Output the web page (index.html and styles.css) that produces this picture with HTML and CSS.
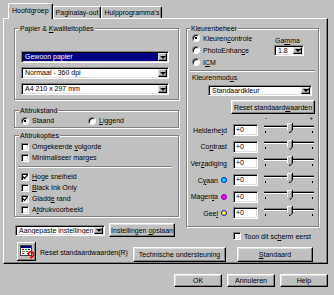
FILE: index.html
```html
<!DOCTYPE html>
<html lang="nl">
<head>
  <meta charset="UTF-8" />
  <title>Hoofdgroep</title>
  <link rel="stylesheet" href="styles.css">
</head>
<body>
  <div class="dialog">
    <div class="tabs">
      <div class="tab active">Hoofdgroep</div>
      <div class="tab">Paginalay-out</div>
      <div class="tab">Hulpprogramma's</div>
    </div>

    <div class="panel">
      <div class="cols">
        <div class="left">
          <fieldset class="group paper">
            <legend>Papier &amp; <u>K</u>waliteitopties</legend>
            <div class="combo sel"><span class="field">Gewoon papier</span><span class="drop"></span></div>
            <div class="combo"><span class="field">Normaal - 360 dpi</span><span class="drop"></span></div>
            <div class="combo"><span class="field">A4 210 x 297 mm</span><span class="drop"></span></div>
          </fieldset>

          <fieldset class="group orient">
            <legend>Afdrukstand</legend>
            <label class="radio on"><i class="dot"></i><span>Staand</span></label>
            <label class="radio"><i class="dot"></i><span><u>L</u>iggend</span></label>
          </fieldset>

          <fieldset class="group opts">
            <legend>Afdrukopties</legend>
            <label class="check"><i class="box"></i><span>Omgekeerde <u>v</u>olgorde</span></label>
            <label class="check"><i class="box"></i><span>Minimaliseer marges</span></label>
            <hr class="sep">
            <label class="check"><i class="box"><svg viewBox="0 0 7 7"><path d="M1 3l2 2 3.5-4"/></svg></i><span><u>H</u>oge snelheid</span></label>
            <label class="check"><i class="box"></i><span><u>B</u>lack Ink Only</span></label>
            <label class="check"><i class="box"><svg viewBox="0 0 7 7"><path d="M1 3l2 2 3.5-4"/></svg></i><span>Gladd<u>e</u> rand</span></label>
            <label class="check"><i class="box"></i><span>A<u>f</u>drukvoorbeeld</span></label>
          </fieldset>

          <div class="presets">
            <div class="combo preset"><span class="field">Aangepaste instellingen</span><span class="drop"></span></div>
            <button class="btn save">Instellingen <u>o</u>pslaan</button>
          </div>
        </div>

        <div class="right">
          <fieldset class="group color">
            <legend>Kleurenbeheer</legend>
            <div class="mode">
              <div class="radios">
                <label class="radio on"><i class="dot"></i><span>Kleuren<u>c</u>ontrole</span></label>
                <label class="radio"><i class="dot"></i><span>PhotoEnhan<u>c</u>e</span></label>
                <label class="radio"><i class="dot"></i><span>I<u>C</u>M</span></label>
              </div>
              <div class="gamma">
                <span class="gamma-label">Ga<u>m</u>ma</span>
                <div class="combo small"><span class="field">1.8</span><span class="drop"></span></div>
              </div>
            </div>
            <hr class="sep wide">
            <span class="caption">Kleurenmod<u>u</u>s</span>
            <div class="combo colormode"><span class="field">Standaardkleur</span><span class="drop"></span></div>
            <button class="btn reset">Reset standaard<u>w</u>aarden</button>

            <div class="adjust">
              <span class="marks"><b>-</b><b>+</b></span>

              <span class="name"><span>Helderhe<u>i</u>d</span></span>
              <span class="value">+0</span>
              <div class="slider"><i class="track"></i><i class="ticks"><b></b><b></b><b></b></i><svg class="thumb" viewBox="0 0 6 10"><path d="M0.5 0.5H4.5V7L2.5 9L0.5 7Z" fill="#c0c0c0"/><path d="M0.5 7V0.5H4.5" stroke="#fff" fill="none"/><path d="M5.5 0V7.2L2.5 10" stroke="#000" fill="none"/><path d="M4.5 1V7L2.5 9" stroke="#808080" fill="none"/></svg></div>

              <span class="name"><span>Co<u>n</u>trast</span></span>
              <span class="value">+0</span>
              <div class="slider"><i class="track"></i><i class="ticks"><b></b><b></b><b></b></i><svg class="thumb" viewBox="0 0 6 10"><path d="M0.5 0.5H4.5V7L2.5 9L0.5 7Z" fill="#c0c0c0"/><path d="M0.5 7V0.5H4.5" stroke="#fff" fill="none"/><path d="M5.5 0V7.2L2.5 10" stroke="#000" fill="none"/><path d="M4.5 1V7L2.5 9" stroke="#808080" fill="none"/></svg></div>

              <span class="name"><span>Ver<u>z</u>adiging</span></span>
              <span class="value">+0</span>
              <div class="slider"><i class="track"></i><i class="ticks"><b></b><b></b><b></b></i><svg class="thumb" viewBox="0 0 6 10"><path d="M0.5 0.5H4.5V7L2.5 9L0.5 7Z" fill="#c0c0c0"/><path d="M0.5 7V0.5H4.5" stroke="#fff" fill="none"/><path d="M5.5 0V7.2L2.5 10" stroke="#000" fill="none"/><path d="M4.5 1V7L2.5 9" stroke="#808080" fill="none"/></svg></div>

              <span class="name"><span>C<u>y</u>aan</span><i class="ink cyan"></i></span>
              <span class="value">+0</span>
              <div class="slider"><i class="track"></i><i class="ticks"><b></b><b></b><b></b></i><svg class="thumb" viewBox="0 0 6 10"><path d="M0.5 0.5H4.5V7L2.5 9L0.5 7Z" fill="#c0c0c0"/><path d="M0.5 7V0.5H4.5" stroke="#fff" fill="none"/><path d="M5.5 0V7.2L2.5 10" stroke="#000" fill="none"/><path d="M4.5 1V7L2.5 9" stroke="#808080" fill="none"/></svg></div>

              <span class="name"><span>Magen<u>t</u>a</span><i class="ink magenta"></i></span>
              <span class="value">+0</span>
              <div class="slider"><i class="track"></i><i class="ticks"><b></b><b></b><b></b></i><svg class="thumb" viewBox="0 0 6 10"><path d="M0.5 0.5H4.5V7L2.5 9L0.5 7Z" fill="#c0c0c0"/><path d="M0.5 7V0.5H4.5" stroke="#fff" fill="none"/><path d="M5.5 0V7.2L2.5 10" stroke="#000" fill="none"/><path d="M4.5 1V7L2.5 9" stroke="#808080" fill="none"/></svg></div>

              <span class="name"><span>Gee<u>l</u></span><i class="ink yellow"></i></span>
              <span class="value">+0</span>
              <div class="slider"><i class="track"></i><i class="ticks"><b></b><b></b><b></b></i><svg class="thumb" viewBox="0 0 6 10"><path d="M0.5 0.5H4.5V7L2.5 9L0.5 7Z" fill="#c0c0c0"/><path d="M0.5 7V0.5H4.5" stroke="#fff" fill="none"/><path d="M5.5 0V7.2L2.5 10" stroke="#000" fill="none"/><path d="M4.5 1V7L2.5 9" stroke="#808080" fill="none"/></svg></div>
            </div>
          </fieldset>

          <label class="check first"><i class="box"></i><span>Toon dit sc<u>h</u>erm eerst</span></label>
        </div>
      </div>

      <div class="actions">
        <svg class="reset-icon" viewBox="0 0 19 19" width="19" height="19">
          <rect width="19" height="19" fill="#c0c0c0"/>
          <path d="M0.5 18V0.5H18" stroke="#fff" fill="none"/>
          <path d="M0 18.5H18.5V0" stroke="#000" fill="none"/>
          <path d="M1 17.5H17.5V1" stroke="#808080" fill="none"/>
          <rect x="3.5" y="3.5" width="11" height="10" fill="#fff" stroke="#404040"/>
          <rect x="4" y="4" width="10" height="2" fill="#000080"/>
          <rect x="5" y="7" width="2" height="1" fill="#c00000"/>
          <rect x="8" y="7" width="2" height="1" fill="#008000"/>
          <rect x="11" y="7" width="2" height="1" fill="#0000c0"/>
          <rect x="5" y="9" width="3" height="1" fill="#808000"/>
          <rect x="9" y="9" width="2" height="1" fill="#008080"/>
          <rect x="5" y="11" width="2" height="1" fill="#800080"/>
          <path d="M11 12.5a2.8 2.8 0 1 1 2.5 2.8" stroke="#e00000" stroke-width="1.6" fill="none"/>
          <path d="M10 11l1.2 2.5 2-1.8z" fill="#e00000"/>
          <path d="M15.5 15.5l-2.3 1.4 0.2-2.6z" fill="#e00000"/>
        </svg>
        <span class="reset-label">Reset standaardwaarden(R)</span>
        <button class="btn support">Technische ondersteuning</button>
        <button class="btn standard"><u>S</u>tandaard</button>
      </div>
    </div>

    <div class="buttons">
      <button class="btn">OK</button>
      <button class="btn">Annuleren</button>
      <button class="btn">Help</button>
    </div>
  </div>
</body>
</html>
```

FILE: styles.css
```css
* {
  margin: 0;
  padding: 0;
  box-sizing: border-box;
}

body {
  width: 334px;
  height: 295px;
  overflow: hidden;
  background: #c0c0c0;
  color: #000;
  font-family: "Liberation Sans", Arial, sans-serif;
  font-size: 7px;
  line-height: 9px;
}

u {
  text-underline-offset: 1px;
}

.dialog {
  height: 295px;
  padding: 3px 0 0 3px;
}

/* tabs */
.tabs {
  display: flex;
  align-items: flex-end;
  height: 15px;
  padding-left: 5px;
}

.tab {
  height: 12px;
  padding: 0 2px;
  border: 1px solid;
  border-color: #fff #000 transparent #fff;
  border-bottom: 0;
  border-radius: 2px 2px 0 0;
  box-shadow: inset -1px 0 #808080;
  line-height: 11px;
  white-space: nowrap;
}

.tab.active {
  position: relative;
  z-index: 1;
  height: 16px;
  margin-bottom: -1px;
  padding: 0 3px;
  background: #c0c0c0;
  line-height: 13px;
}

/* tab page */
.panel {
  width: 325px;
  height: 246px;
  padding: 5px 0 0 10px;
  border: 1px solid;
  border-color: #fff #000 #000 #fff;
  box-shadow: inset -1px -1px #808080;
}

.cols {
  display: grid;
  grid-template-columns: 165px 133px;
  column-gap: 7px;
}

.left,
.right {
  display: flex;
  flex-direction: column;
}

/* group boxes */
.group {
  min-width: 0;
  border: 1px solid #808080;
  box-shadow: 1px 1px 0 #fff, inset 1px 1px 0 #fff;
}

.group legend {
  margin-left: -2px;
  padding: 0 1px;
  background: #c0c0c0;
  line-height: 9px;
}

.paper {
  display: flex;
  flex-direction: column;
  gap: 4px;
  padding: 18px 9px 4px 6px;
}

.orient {
  display: flex;
  margin-top: 6px;
  padding: 1px 0 2px 6px;
}

.orient .radio {
  width: 67px;
}

.opts {
  display: flex;
  flex-direction: column;
  margin-top: 3px;
  padding: 1px 0 1px 6px;
}

.sep {
  height: 2px;
  margin: 3px 6px 3px -3px;
  border: 0;
  border-top: 1px solid #808080;
  border-bottom: 1px solid #fff;
}

/* combo boxes */
.combo {
  display: flex;
  height: 12px;
  padding: 1px;
  border: 1px solid;
  border-color: #808080 #fff #fff #808080;
  box-shadow: inset 1px 1px #000, inset -1px -1px #dfdfdf;
  background: #fff;
}

.field {
  flex: 1;
  padding-left: 2px;
  overflow: hidden;
  line-height: 8px;
  white-space: nowrap;
}

.combo.sel .field {
  background: #000080;
  color: #fff;
}

.drop {
  display: flex;
  align-items: center;
  justify-content: center;
  width: 9px;
  border: 1px solid;
  border-color: #dfdfdf #000 #000 #dfdfdf;
  box-shadow: inset -1px -1px #808080;
  background: #c0c0c0;
}

.drop::after {
  content: "";
  border-style: solid;
  border-width: 3px 3px 0;
  border-color: #000 transparent transparent;
}

/* radios and checks */
.radio,
.check {
  display: flex;
  align-items: center;
  gap: 3px;
  white-space: nowrap;
}

.check {
  height: 11px;
}

.dot {
  position: relative;
  flex: none;
  width: 8px;
  height: 8px;
  border: 1px solid;
  border-color: #808080 #fff #fff #808080;
  border-radius: 50%;
  box-shadow: inset 1px 1px #000;
  background: #fff;
}

.radio.on .dot::after {
  content: "";
  position: absolute;
  top: 2px;
  left: 2px;
  width: 2px;
  height: 2px;
  background: #000;
}

.box {
  display: flex;
  flex: none;
  width: 8px;
  height: 8px;
  border: 1px solid;
  border-color: #808080 #fff #fff #808080;
  box-shadow: inset 1px 1px #000, inset -1px -1px #dfdfdf;
  background: #fff;
}

.box svg {
  width: 6px;
  height: 6px;
}

.box path {
  fill: none;
  stroke: #000;
  stroke-width: 1.4;
}

/* buttons */
.btn {
  height: 14px;
  border: 1px solid;
  border-color: #fff #000 #000 #fff;
  box-shadow: inset -1px -1px #808080, inset 1px 1px #dfdfdf;
  background: #c0c0c0;
  color: #000;
  font: inherit;
  white-space: nowrap;
}

.presets {
  display: flex;
  align-items: center;
  gap: 4px;
  margin-top: 6px;
  padding-left: 1px;
}

.combo.preset {
  width: 90px;
  height: 11px;
}

.combo.preset .field {
  line-height: 7px;
}

.save {
  width: 66px;
}

/* colour management */
.color {
  display: flex;
  flex-direction: column;
  padding: 0 0 4px 5px;
}

.mode {
  display: flex;
  margin-top: -1px;
}

.radios .radio {
  height: 12px;
}

.gamma {
  display: flex;
  flex-direction: column;
  margin: 4px 14px 0 auto;
}

.gamma-label {
  padding-left: 1px;
}

.combo.small {
  width: 30px;
  height: 11px;
}

.combo.small .field,
.combo.colormode .field {
  line-height: 7px;
}

.sep.wide {
  margin: 2px 3px 0 -2px;
}

.caption {
  margin-top: 1px;
}

.combo.colormode {
  width: 104px;
  height: 11px;
  margin: 3px 0 0 16px;
}

.reset {
  align-self: flex-end;
  width: 84px;
  margin: 4px 3px 0 0;
}

.adjust {
  display: grid;
  grid-template-columns: 35px 25px 50px;
  grid-template-rows: 8px;
  grid-auto-rows: 16.6px;
  column-gap: 6px;
  align-items: center;
}

.marks {
  grid-column: 3;
  display: flex;
  justify-content: space-between;
  padding: 0 1px;
  font-size: 6px;
  line-height: 6px;
}

.marks b {
  font-weight: normal;
}

.name {
  display: flex;
  align-items: center;
  justify-content: flex-end;
  gap: 3px;
  white-space: nowrap;
}

.ink {
  flex: none;
  width: 6px;
  height: 6px;
  border: 1px solid #1010c0;
  border-radius: 50%;
}

.ink.cyan { background: #00e0ff; }
.ink.magenta { background: #ff00ff; border-color: #8000a0; }
.ink.yellow { background: #ffff00; }

.value {
  height: 12px;
  padding-left: 2px;
  border: 1px solid;
  border-color: #808080 #fff #fff #808080;
  box-shadow: inset 1px 1px #000, inset -1px -1px #dfdfdf;
  background: #fff;
  line-height: 10px;
}

.slider {
  position: relative;
  display: flex;
  flex-direction: column;
  justify-content: center;
  height: 100%;
}

.track {
  height: 3px;
  margin-top: -3px;
  border-top: 1px solid #808080;
  border-bottom: 1px solid #fff;
  background: #000;
}

.ticks {
  display: flex;
  justify-content: space-between;
  margin-top: 3px;
  padding: 0 1px;
}

.ticks b {
  width: 1px;
  height: 2px;
  background: #000;
}

.thumb {
  position: absolute;
  top: 50%;
  left: 23px;
  width: 6px;
  height: 10px;
  margin-top: -7px;
}

.check.first {
  margin: 4px 0 0 47px;
}

/* bottom of page */
.actions {
  display: flex;
  align-items: center;
  height: 19px;
  margin-top: 1px;
  padding-left: 3px;
}

.reset-icon {
  flex: none;
  align-self: flex-start;
  margin-top: -1px;
}

.reset-label {
  width: 97px;
  padding-left: 4px;
  white-space: nowrap;
}

.support {
  width: 93px;
  height: 15px;
  margin-top: 4px;
}

.standard {
  width: 76px;
  height: 15px;
  margin: 4px 0 0 11px;
}

.buttons {
  display: flex;
  justify-content: flex-end;
  gap: 5px;
  margin-top: 10px;
  padding-right: 6px;
}

.buttons .btn {
  width: 48px;
  height: 13px;
}
```
